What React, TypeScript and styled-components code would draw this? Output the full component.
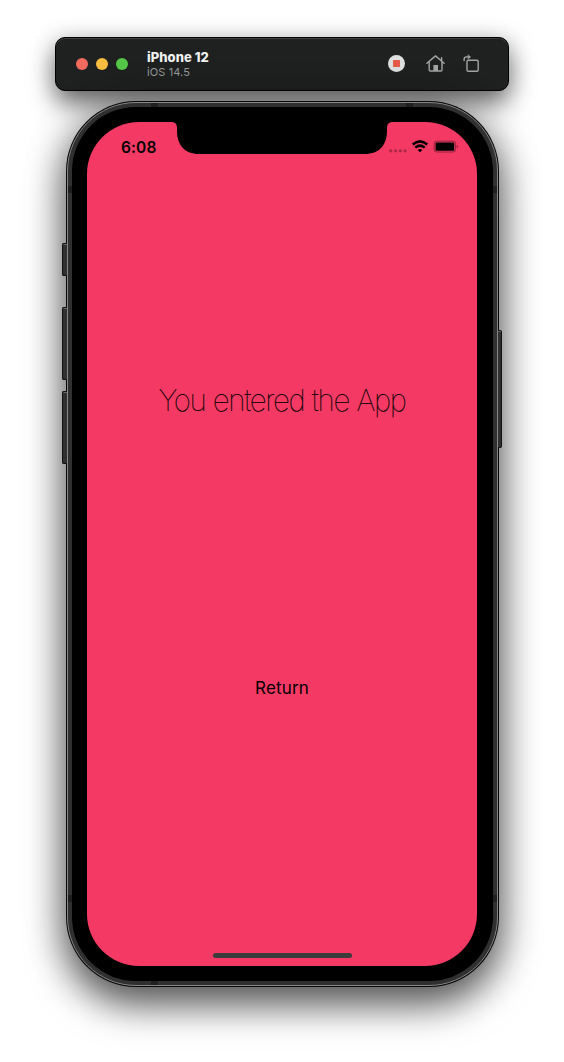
import React from "react";
import styled, { createGlobalStyle } from "styled-components";

const Global = createGlobalStyle`
  * { box-sizing: border-box; }
  body { margin: 0; background: #fff; font-family: Inter, "Liberation Sans", sans-serif; }
`;

const Desktop = styled.main`
  width: 564px;
  height: 1062px;
  overflow: hidden;
  padding: 37px 65px 0 55px;
  display: flex;
  flex-direction: column;
  gap: 10px;
`;

const TitleBar = styled.header`
  position: relative;
  width: 454px;
  height: 54px;
  display: flex;
  align-items: center;
  flex-shrink: 0;
  padding: 0 27px 0 21px;
  border: 1px solid #000;
  border-radius: 10px;
  background: #1e2120;
  box-shadow: inset 0 1px 0 #3b3e3d, 0 12px 26px rgba(0, 0, 0, 0.58), 0 0 24px rgba(0, 0, 0, 0.12);
`;

const TrafficLights = styled.div`
  display: flex;
  gap: 8px;
  margin-left: -1px;
`;

const Light = styled.span<{ $color: string }>`
  width: 12px;
  height: 12px;
  border-radius: 50%;
  background: ${(p) => p.$color};
`;

const DeviceInfo = styled.div`
  display: flex;
  flex-direction: column;
  margin-left: 19px;
  flex: 1;
`;

const DeviceName = styled.strong`
  font-size: 13px;
  line-height: 15px;
  font-weight: 800;
  letter-spacing: 0.05px;
  color: #f0f1f1;
`;

const DeviceSystem = styled.span`
  font-size: 11px;
  line-height: 14px;
  letter-spacing: 0.1px;
  color: #989a99;
`;

const Actions = styled.div`
  display: flex;
  align-items: center;
  margin-top: -1px;
`;

const Action = styled.button<{ $gap?: number }>`
  display: flex;
  padding: 0;
  margin-left: ${(p) => p.$gap ?? 0}px;
  border: 0;
  background: none;
`;

const Device = styled.section`
  position: relative;
  width: 433px;
  height: 886px;
  flex-shrink: 0;
  margin-left: 11px;
  border-radius: 70px;
  padding: 1px;
  background: #080808;
  box-shadow: 0 18px 38px rgba(0, 0, 0, 0.6), 0 2px 40px rgba(0, 0, 0, 0.28);
`;

const Frame = styled.div`
  position: relative;
  height: 100%;
  border: 1px solid #868686;
  border-radius: 69px;
  padding: 4px;
  background: #303030;
`;

const Bezel = styled.div`
  height: 100%;
  padding: 15px;
  border-radius: 64px;
  background: #000;
`;

const Screen = styled.div`
  position: relative;
  width: 390px;
  height: 844px;
  border-radius: 52px;
  background: #f43a64;
  color: #000;
  display: flex;
  flex-direction: column;
  align-items: center;
`;

const SideButton = styled.span<{ $top: number; $height: number; $right?: boolean }>`
  position: absolute;
  top: ${(p) => p.$top}px;
  ${(p) => (p.$right ? "right: -3px;" : "left: -4px;")}
  width: ${(p) => (p.$right ? 4 : 5)}px;
  height: ${(p) => p.$height}px;
  border: 1px solid #111;
  border-${(p) => (p.$right ? "left" : "right")}: 0;
  border-radius: ${(p) => (p.$right ? "0 2px 2px 0" : "2px 0 0 2px")};
  background: #303030;
  box-shadow: inset 0 1px 0 #686868;
`;

const Antenna = styled.i<{ $x: number; $y: number; $vertical?: boolean }>`
  position: absolute;
  left: ${(p) => p.$x}px;
  top: ${(p) => p.$y}px;
  width: ${(p) => (p.$vertical ? 4 : 7)}px;
  height: ${(p) => (p.$vertical ? 7 : 4)}px;
  background: #1f1f1f;
`;

const Notch = styled.svg`
  position: absolute;
  top: -1px;
  left: 84px;
`;

const StatusBar = styled.div`
  width: 100%;
  height: 44px;
  padding: 14px 18px 0 34px;
  display: flex;
  align-items: flex-start;
  justify-content: space-between;
`;

const Clock = styled.time`
  padding-top: 1px;
  font-size: 15.5px;
  line-height: 22px;
  font-weight: 600;
  letter-spacing: 0.1px;
`;

const StatusIcons = styled.svg`
  margin-top: 4px;
`;

const Heading = styled.h1`
  margin: 214px 0 0;
  font-size: 29.5px;
  line-height: 40px;
  font-weight: 100;
  letter-spacing: -1.35px;
  word-spacing: 0.5px;
  white-space: nowrap;
  -webkit-text-stroke: 0.2px #000;
`;

const ReturnButton = styled.button`
  margin: 254px 0 0;
  padding: 0;
  border: 0;
  background: none;
  color: #000;
  font-family: inherit;
  font-size: 17px;
  line-height: 28px;
  letter-spacing: 0.15px;
`;

const HomeIndicator = styled.span`
  width: 139px;
  height: 5px;
  margin-top: auto;
  margin-bottom: 8px;
  border-radius: 3px;
  background: #3c3c3c;
`;

export default function App() {
  return (
    <>
      <Global />
      <Desktop>
        <TitleBar>
          <TrafficLights>
            <Light $color="#f46a5e" />
            <Light $color="#f9be40" />
            <Light $color="#54c748" />
          </TrafficLights>
          <DeviceInfo>
            <DeviceName>iPhone 12</DeviceName>
            <DeviceSystem>iOS 14.5</DeviceSystem>
          </DeviceInfo>
          <Actions>
            <Action aria-label="Stop">
              <svg width="18" height="18" viewBox="0 0 18 18">
                <circle cx="9.5" cy="8.5" r="8.5" fill="#dedfdf" />
                <rect x="6" y="5" width="7" height="7" rx="0.7" fill="#e65a48" />
              </svg>
            </Action>
            <Action aria-label="Home" $gap={21}>
              <svg width="20" height="18" viewBox="0 0 20 18" fill="none" stroke="#a3a4a4" strokeWidth="1.4" strokeLinecap="round" strokeLinejoin="round">
                <path d="M0.9 8.2 9.5 0.9 18.1 8.2M3.2 7V14.8Q3.2 16 4.4 16H14.8Q16 16 16 14.8V7M15.6 2.7V5.8" />
                <path d="M7.4 16V10H12V16Z" fill="#a3a4a4" stroke="none" />
              </svg>
            </Action>
            <Action aria-label="Rotate" $gap={17}>
              <svg width="18" height="20" viewBox="0 0 18 20" fill="none" stroke="#a3a4a4" strokeWidth="1.4" strokeLinecap="round" strokeLinejoin="round">
                <rect x="4" y="6.2" width="11.2" height="11" rx="1.3" />
                <path d="M1.1 6.6V5.5Q1.1 2.9 3.5 2.9H5.7" />
                <path d="M5.2 0.9 7.7 2.9 5.2 4.9Z" fill="#a3a4a4" strokeWidth="0.5" />
              </svg>
            </Action>
          </Actions>
        </TitleBar>

        <Device>
          <SideButton $top={142} $height={33} />
          <SideButton $top={206} $height={73} />
          <SideButton $top={290} $height={73} />
          <SideButton $right $top={229} $height={118} />
          <Frame>
            <Antenna $x={83} $y={0} />
            <Antenna $x={338} $y={0} />
            <Antenna $x={83} $y={878} />
            <Antenna $vertical $x={0} $y={83} />
            <Antenna $vertical $x={425} $y={83} />
            <Antenna $vertical $x={0} $y={792} />
            <Antenna $vertical $x={425} $y={792} />
            <Bezel>
              <Screen>
                <Notch width="222" height="33" viewBox="0 0 222 33">
                  <path d="M0 0H222V1C218 1 216 3 216 7V10C216 24 208 33 194 33H28C14 33 6 24 6 10V7C6 3 4 1 0 1Z" fill="#000" />
                </Notch>
                <StatusBar>
                  <Clock>6:08</Clock>
                  <StatusIcons width="70" height="14" viewBox="0 0 70 14">
                    <g fill="#000" opacity="0.3">
                      <circle cx="1.8" cy="10.8" r="1.6" />
                      <circle cx="6.6" cy="10.8" r="1.6" />
                      <circle cx="11.3" cy="10.8" r="1.6" />
                      <circle cx="16.1" cy="10.8" r="1.6" />
                    </g>
                    <g fill="none" stroke="#000" strokeWidth="2.5">
                      <path d="M23.7 4.5Q31-1.8 38.3 4.5" />
                      <path d="M26.3 7.6Q31 3.6 35.7 7.6" />
                    </g>
                    <path d="M28.7 9.9Q31 8.2 33.3 9.9L31 12.2Z" />
                    <rect x="45.2" y="1.2" width="21.4" height="10.8" rx="2.6" fill="none" stroke="#000" strokeOpacity="0.4" />
                    <rect x="46.6" y="2.5" width="18.6" height="8.2" rx="1.2" />
                    <path d="M67.8 4.9Q70.4 6.6 67.8 8.3Z" opacity="0.45" />
                  </StatusIcons>
                </StatusBar>
                <Heading>You entered the App</Heading>
                <ReturnButton>Return</ReturnButton>
                <HomeIndicator />
              </Screen>
            </Bezel>
          </Frame>
        </Device>
      </Desktop>
    </>
  );
}
